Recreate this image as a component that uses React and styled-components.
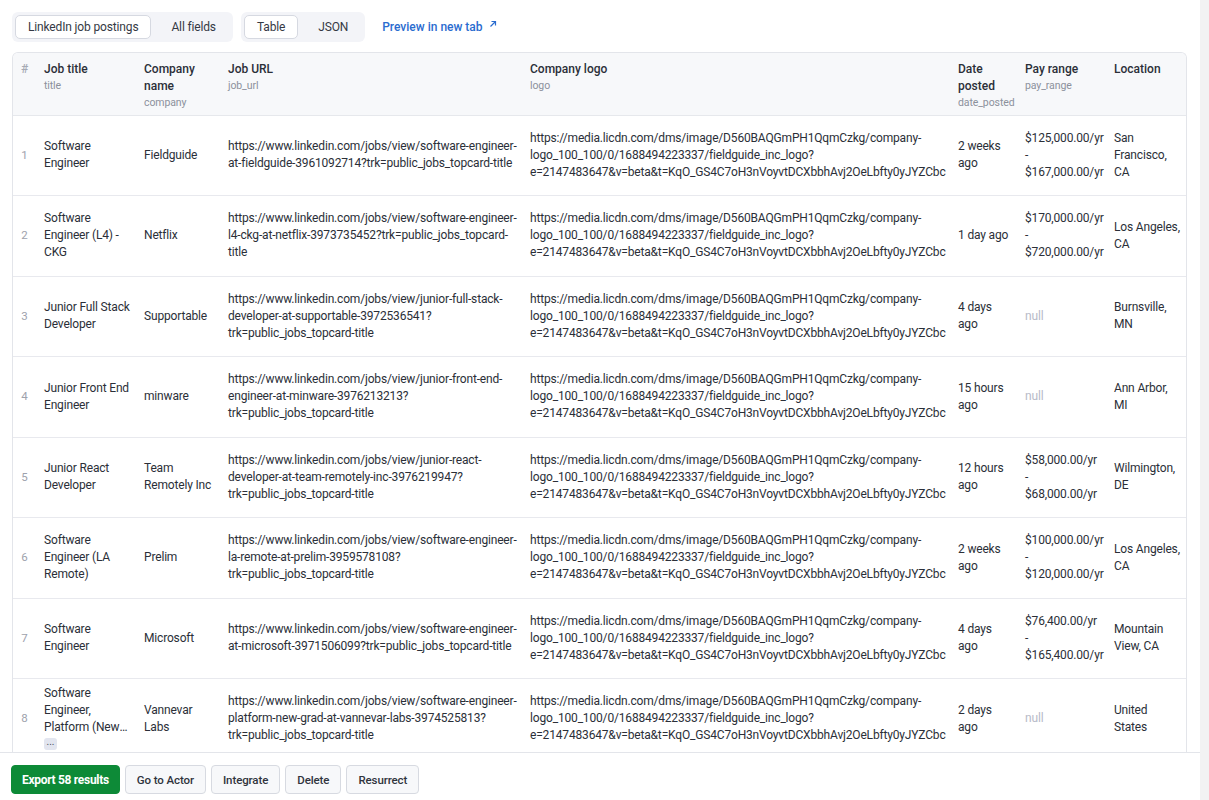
import React from 'react';
import styled, { createGlobalStyle } from 'styled-components';

const GlobalStyle = createGlobalStyle`
  html, body { margin: 0; padding: 0; background: #fff; }
  body {
    font-family: Roboto, "Open Sans", "Noto Sans", sans-serif;
    color: #262a33;
    overflow: hidden;
  }
  * { box-sizing: border-box; }
`;

const Shell = styled.div`
  display: flex;
  width: 1209px;
  height: 800px;
`;

const Main = styled.div`
  flex: 1;
  min-width: 0;
  display: flex;
  flex-direction: column;
`;

const ScrollTrack = styled.div`
  width: 9px;
  background: #f2f2f3;
`;

const Toolbar = styled.div`
  display: flex;
  align-items: center;
  gap: 8px;
  padding: 12px 12px 0 12px;
  height: 42px;
`;

const SegGroup = styled.div`
  display: flex;
  align-items: center;
  height: 30px;
  padding: 3px;
  background: #f3f4f8;
  border-radius: 6px;
`;

const SegTab = styled.button`
  height: 24px;
  font-family: inherit;
  font-size: 12px;
  letter-spacing: -0.15px;
  color: #353944;
  border-radius: 5px;
  cursor: pointer;
  padding: ${(p) => (p.$active ? '0 12px' : '0 13px')};
  margin-left: ${(p) => (p.$active ? '0' : '6px')};
  background: ${(p) => (p.$active ? '#fff' : 'transparent')};
  border: 1px solid ${(p) => (p.$active ? '#d6d9e1' : 'transparent')};
`;

const PreviewLink = styled.a`
  margin-left: 9px;
  font-size: 12px;
  font-weight: 500;
  color: #2a6ccf;
  text-decoration: none;
  display: flex;
  align-items: center;
  gap: 6px;
`;

const ArrowIcon = styled.svg`
  width: 8px;
  height: 8px;
  margin-top: -7px;
`;

const TableCard = styled.div`
  flex: 1;
  min-height: 0;
  margin: 10px 13px 0 12px;
  border: 1px solid #e3e5ea;
  border-bottom: none;
  border-radius: 6px 6px 0 0;
  overflow: hidden;
`;

const Table = styled.table`
  width: 100%;
  border-collapse: collapse;
  table-layout: fixed;
`;

const HeadCell = styled.th`
  height: 62px;
  vertical-align: top;
  text-align: ${(p) => (p.$center ? 'center' : 'left')};
  padding: ${(p) => (p.$center ? '8px 0 0' : '8px 4px 0 8px')};
  background: #f7f8fa;
  border-bottom: 1px solid #e6e8ec;
  font-weight: normal;
`;

const HeadTitle = styled.div`
  font-size: 12px;
  font-weight: 500;
  line-height: 17px;
  color: ${(p) => (p.$muted ? '#a6aab4' : '#2b2f38')};
`;

const HeadKey = styled.div`
  font-size: 10.5px;
  line-height: 16px;
  letter-spacing: -0.1px;
  color: #8c919c;
`;

const Row = styled.tr`
  height: 80.5px;
  border-bottom: 1px solid #e8e9ee;
`;

const Cell = styled.td`
  vertical-align: middle;
  padding: 0 ${(p) => (p.$tight ? '0' : '4px')} 0 8px;
  font-size: 12px;
  line-height: 17px;
  letter-spacing: -0.17px;
  color: #2b2f38;
  overflow-wrap: anywhere;
`;

const IndexCell = styled(Cell)`
  text-align: center;
  padding: 0;
  color: #9ea2ad;
  font-size: 11.5px;
`;

const PayRange = styled.div`
  width: min-content;
  overflow-wrap: normal;
  word-spacing: 40px;
`;

const Null = styled.span`
  color: #b7bbc8;
`;

const Clamp = styled.div`
  display: -webkit-box;
  -webkit-box-orient: vertical;
  -webkit-line-clamp: 3;
  overflow: hidden;
`;

const MoreLine = styled.div`
  height: 17px;
  display: flex;
  align-items: center;
`;

const MoreButton = styled.span`
  display: block;
  width: 13px;
  height: 12px;
  border-radius: 3px;
  background: #e2e5ef;
  color: #4a4f5c;
  font-size: 10px;
  line-height: 7px;
  letter-spacing: 0;
  text-align: center;
`;

const Footer = styled.div`
  display: flex;
  gap: 5px;
  height: 48px;
  padding: 12px 11px 0 11px;
  border-top: 1px solid #e3e5ea;
`;

const Button = styled.button`
  height: 29px;
  padding: 0 ${(p) => (p.$primary ? '10px' : '11px')};
  font-family: inherit;
  font-size: ${(p) => (p.$primary ? '12px' : '11.5px')};
  font-weight: ${(p) => (p.$primary ? 700 : 500)};
  letter-spacing: ${(p) => (p.$primary ? '-0.3px' : '-0.1px')};
  color: ${(p) => (p.$primary ? '#fff' : '#30343d')};
  background: ${(p) => (p.$primary ? '#0d8a37' : '#f7f8fa')};
  border: 1px solid ${(p) => (p.$primary ? '#0d8a37' : '#d7dae1')};
  border-radius: 4px;
  cursor: pointer;
`;

const LOGO =
  'https://media.licdn.com/dms/image/D560BAQGmPH1QqmCzkg/company-logo_100_100/0/1688494223337/fieldguide_inc_logo?e=2147483647&v=beta&t=KqO_GS4C7oH3nVoyvtDCXbbhAvj2OeLbfty0yJYZCbc';
const BASE = 'https://www.linkedin.com/jobs/view/';
const TRK = '?trk=public_jobs_topcard-title';

const columns = [
  { w: 23, title: '#', muted: true, center: true },
  { w: 100, title: 'Job title', key: 'title' },
  { w: 84, title: 'Company name', key: 'company' },
  { w: 302, title: 'Job URL', key: 'job_url' },
  { w: 428, title: 'Company logo', key: 'logo' },
  { w: 67, title: 'Date posted', key: 'date_posted' },
  { w: 89, title: 'Pay range', key: 'pay_range' },
  { w: 81, title: 'Location', key: '' },
];

const rows = [
  ['Software Engineer', 'Fieldguide', 'software-engineer-at-fieldguide-3961092714', '2 weeks ago', '$125,000.00/yr - $167,000.00/yr', 'San Francisco, CA'],
  ['Software Engineer (L4) - CKG', 'Netflix', 'software-engineer-l4-ckg-at-netflix-3973735452', '1 day ago', '$170,000.00/yr - $720,000.00/yr', 'Los Angeles, CA'],
  ['Junior Full Stack Developer', 'Supportable', 'junior-full-stack-developer-at-supportable-3972536541', '4 days ago', null, 'Burnsville, MN'],
  ['Junior Front End Engineer', 'minware', 'junior-front-end-engineer-at-minware-3976213213', '15 hours ago', null, 'Ann Arbor, MI'],
  ['Junior React Developer', 'Team Remotely Inc', 'junior-react-developer-at-team-remotely-inc-3976219947', '12 hours ago', '$58,000.00/yr - $68,000.00/yr', 'Wilmington, DE'],
  ['Software Engineer (LA Remote)', 'Prelim', 'software-engineer-la-remote-at-prelim-3959578108', '2 weeks ago', '$100,000.00/yr - $120,000.00/yr', 'Los Angeles, CA'],
  ['Software Engineer', 'Microsoft', 'software-engineer-at-microsoft-3971506099', '4 days ago', '$76,400.00/yr - $165,400.00/yr', 'Mountain View, CA'],
  ['Software Engineer, Platform (New Grad)', 'Vannevar Labs', 'software-engineer-platform-new-grad-at-vannevar-labs-3974525813', '2 days ago', null, 'United States', true],
];

export default function App() {
  return (
    <>
      <GlobalStyle />
      <Shell>
        <Main>
          <Toolbar>
            <SegGroup>
              <SegTab $active>LinkedIn job postings</SegTab>
              <SegTab>All fields</SegTab>
            </SegGroup>
            <SegGroup>
              <SegTab $active>Table</SegTab>
              <SegTab>JSON</SegTab>
            </SegGroup>
            <PreviewLink href="#">
              Preview in new tab
              <ArrowIcon viewBox="0 0 8 8" fill="none" stroke="#2a6ccf" strokeWidth="1.2">
                <path d="M1.5 6.5L6.5 1.5M2.5 1.5h4v4" />
              </ArrowIcon>
            </PreviewLink>
          </Toolbar>
          <TableCard>
            <Table>
              <colgroup>
                {columns.map((c, i) => (
                  <col key={i} style={{ width: c.w }} />
                ))}
              </colgroup>
              <thead>
                <tr>
                  {columns.map((c, i) => (
                    <HeadCell key={i} $center={c.center}>
                      <HeadTitle $muted={c.muted}>{c.title}</HeadTitle>
                      {c.key ? <HeadKey>{c.key}</HeadKey> : null}
                    </HeadCell>
                  ))}
                </tr>
              </thead>
              <tbody>
                {rows.map((r, i) => (
                  <Row key={i}>
                    <IndexCell>{i + 1}</IndexCell>
                    <Cell>
                      {r[6] ? (
                        <>
                          <Clamp>{r[0]}</Clamp>
                          <MoreLine>
                            <MoreButton>...</MoreButton>
                          </MoreLine>
                        </>
                      ) : (
                        r[0]
                      )}
                    </Cell>
                    <Cell>{r[1]}</Cell>
                    <Cell>{BASE + r[2] + TRK}</Cell>
                    <Cell $tight>{LOGO}</Cell>
                    <Cell>{r[3]}</Cell>
                    <Cell $tight>{r[4] ? <PayRange>{r[4]}</PayRange> : <Null>null</Null>}</Cell>
                    <Cell>{r[5]}</Cell>
                  </Row>
                ))}
              </tbody>
            </Table>
          </TableCard>
          <Footer>
            <Button $primary>Export 58 results</Button>
            <Button>Go to Actor</Button>
            <Button>Integrate</Button>
            <Button>Delete</Button>
            <Button>Resurrect</Button>
          </Footer>
        </Main>
        <ScrollTrack />
      </Shell>
    </>
  );
}
